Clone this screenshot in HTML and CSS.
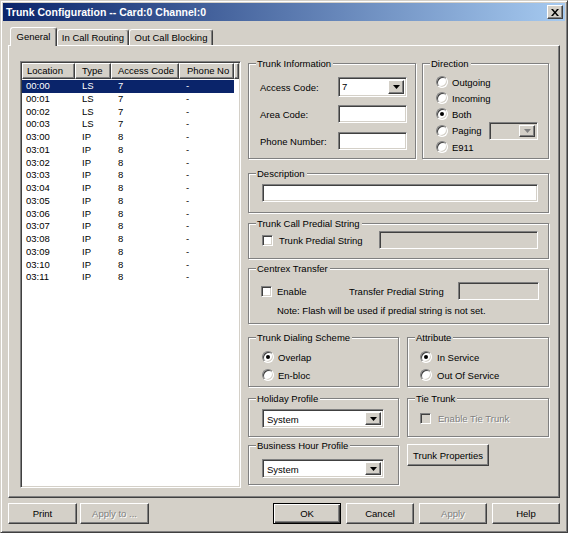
FILE: index.html
```html
<!DOCTYPE html>
<html>
<head>
<meta charset="utf-8">
<link rel="stylesheet" href="styles.css">
</head>
<body>
<div class="window">
  <div class="titlebar">
    <span class="title">Trunk Configuration -- Card:0 Channel:0</span>
    <div class="close raised"><svg width="8" height="7" viewBox="0 0 8 7"><path d="M0 0h2l2 2.4L6 0h2L5 3.5 8 7H6L4 4.6 2 7H0l3-3.5z"/></svg></div>
  </div>
  <div class="tabs">
    <div class="tab sel">General</div>
    <div class="tab t2">In Call Routing</div>
    <div class="tab t3">Out Call Blocking</div>
  </div>
  <div class="panel">
    <div class="listview sunk">
      <div class="lv-head">
        <div class="hc c1">Location</div>
        <div class="hc c2">Type</div>
        <div class="hc c3">Access Code</div>
        <div class="hc c4">Phone No</div>
        <div class="hc fill"></div>
      </div>
      <div class="lv-body">
        <div class="lv-row selrow"><span class="d1">00:00</span><span class="d2">LS</span><span class="d3">7</span><span class="d4">-</span></div>
        <div class="lv-row"><span class="d1">00:01</span><span class="d2">LS</span><span class="d3">7</span><span class="d4">-</span></div>
        <div class="lv-row"><span class="d1">00:02</span><span class="d2">LS</span><span class="d3">7</span><span class="d4">-</span></div>
        <div class="lv-row"><span class="d1">00:03</span><span class="d2">LS</span><span class="d3">7</span><span class="d4">-</span></div>
        <div class="lv-row"><span class="d1">03:00</span><span class="d2">IP</span><span class="d3">8</span><span class="d4">-</span></div>
        <div class="lv-row"><span class="d1">03:01</span><span class="d2">IP</span><span class="d3">8</span><span class="d4">-</span></div>
        <div class="lv-row"><span class="d1">03:02</span><span class="d2">IP</span><span class="d3">8</span><span class="d4">-</span></div>
        <div class="lv-row"><span class="d1">03:03</span><span class="d2">IP</span><span class="d3">8</span><span class="d4">-</span></div>
        <div class="lv-row"><span class="d1">03:04</span><span class="d2">IP</span><span class="d3">8</span><span class="d4">-</span></div>
        <div class="lv-row"><span class="d1">03:05</span><span class="d2">IP</span><span class="d3">8</span><span class="d4">-</span></div>
        <div class="lv-row"><span class="d1">03:06</span><span class="d2">IP</span><span class="d3">8</span><span class="d4">-</span></div>
        <div class="lv-row"><span class="d1">03:07</span><span class="d2">IP</span><span class="d3">8</span><span class="d4">-</span></div>
        <div class="lv-row"><span class="d1">03:08</span><span class="d2">IP</span><span class="d3">8</span><span class="d4">-</span></div>
        <div class="lv-row"><span class="d1">03:09</span><span class="d2">IP</span><span class="d3">8</span><span class="d4">-</span></div>
        <div class="lv-row"><span class="d1">03:10</span><span class="d2">IP</span><span class="d3">8</span><span class="d4">-</span></div>
        <div class="lv-row"><span class="d1">03:11</span><span class="d2">IP</span><span class="d3">8</span><span class="d4">-</span></div>
      </div>
    </div>

    <div class="right">
      <div class="row r1">
        <div class="group g-trunk">
          <div class="legend">Trunk Information</div>
          <div class="frow f1"><span class="flabel">Access Code:</span><div class="combo sunk w69 h20"><span class="ctext">7</span><div class="drop raised"><svg width="7" height="4" viewBox="0 0 7 4"><path d="M0 0h7L3.5 4z"/></svg></div></div></div>
          <div class="frow f2"><span class="flabel">Area Code:</span><div class="input sunk w69 h18"></div></div>
          <div class="frow f3"><span class="flabel">Phone Number:</span><div class="input sunk w69 h18"></div></div>
        </div>
        <div class="group g-dir">
          <div class="legend">Direction</div>
          <div class="opt o1"><span class="radio"></span><span>Outgoing</span></div>
          <div class="opt"><span class="radio"></span><span>Incoming</span></div>
          <div class="opt"><span class="radio on"></span><span>Both</span></div>
          <div class="opt opag"><span class="radio"></span><span>Paging</span><div class="combo sunk dis pcombo"><span class="ctext"></span><div class="drop raised"><svg width="7" height="4" viewBox="0 0 7 4"><path d="M0 0h7L3.5 4z" fill="#808080"/></svg></div></div></div>
          <div class="opt"><span class="radio"></span><span>E911</span></div>
        </div>
      </div>

      <div class="group g-desc">
        <div class="legend">Description</div>
        <div class="input sunk desc-in"></div>
      </div>

      <div class="group g-pred">
        <div class="legend">Trunk Call Predial String</div>
        <div class="crow pred-row"><span class="chk"></span><span class="clabel">Trunk Predial String</span><div class="input sunk dis pred-in"></div></div>
      </div>

      <div class="group g-centrex">
        <div class="legend">Centrex Transfer</div>
        <div class="crow cx-row"><span class="chk"></span><span class="clabel cx-enable">Enable</span><span>Transfer Predial String</span><div class="input sunk dis cx-in"></div></div>
        <div class="note">Note: Flash will be used if predial string is not set.</div>
      </div>

      <div class="row r5">
        <div class="group g-dial">
          <div class="legend">Trunk Dialing Scheme</div>
          <div class="opt2 first"><span class="radio on"></span><span>Overlap</span></div>
          <div class="opt2"><span class="radio"></span><span>En-bloc</span></div>
        </div>
        <div class="group g-attr">
          <div class="legend">Attribute</div>
          <div class="opt2 first"><span class="radio on"></span><span>In Service</span></div>
          <div class="opt2"><span class="radio"></span><span>Out Of Service</span></div>
        </div>
      </div>

      <div class="row r6">
        <div class="col">
          <div class="group g-hol">
            <div class="legend">Holiday Profile</div>
            <div class="combo sunk pcombo2"><span class="ctext">System</span><div class="drop raised"><svg width="7" height="4" viewBox="0 0 7 4"><path d="M0 0h7L3.5 4z"/></svg></div></div>
          </div>
          <div class="group g-bus">
            <div class="legend">Business Hour Profile</div>
            <div class="combo sunk pcombo2"><span class="ctext">System</span><div class="drop raised"><svg width="7" height="4" viewBox="0 0 7 4"><path d="M0 0h7L3.5 4z"/></svg></div></div>
          </div>
        </div>
        <div class="col">
          <div class="group g-tie">
            <div class="legend">Tie Trunk</div>
            <div class="crow tie-row"><span class="chk dis"></span><span class="clabel distext">Enable Tie Trunk</span></div>
          </div>
          <div class="btn raised tp">Trunk Properties</div>
        </div>
      </div>
    </div>
  </div>

  <div class="buttons">
    <div class="btn raised bb">Print</div>
    <div class="btn raised bb distext">Apply to ...</div>
    <div class="rgroup">
      <div class="btn def bb2">OK</div>
      <div class="btn raised bb2">Cancel</div>
      <div class="btn raised bb2 distext">Apply</div>
      <div class="btn raised bb2">Help</div>
    </div>
  </div>
</div>
</body>
</html>
```

FILE: styles.css
```css
* { box-sizing: border-box; }
body {
  margin: 0;
  background: #d4d0c8;
  font-family: "Liberation Sans", Arial, sans-serif;
  font-size: 9.5px;
  color: #000;
}
.window {
  width: 568px;
  height: 533px;
  border: 1px solid;
  border-color: #d4d0c8 #404040 #404040 #d4d0c8;
  box-shadow: inset 1px 1px #fff, inset -1px -1px #808080;
  padding: 2px;
  background: #d4d0c8;
  display: flex;
  flex-direction: column;
}
.raised {
  background: #d4d0c8;
  border: 1px solid;
  border-color: #fff #404040 #404040 #fff;
  box-shadow: inset -1px -1px #808080;
}
.sunk {
  background: #fff;
  border: 1px solid;
  border-color: #808080 #fff #fff #808080;
  box-shadow: inset 1px 1px #404040, inset -1px -1px #d4d0c8;
}
.titlebar {
  height: 18px;
  flex: none;
  background: linear-gradient(90deg, #0a246a, #a6caf0);
  display: flex;
  align-items: center;
  padding-left: 3px;
}
.title {
  color: #fff;
  font-weight: bold;
  font-size: 10.5px;
  white-space: nowrap;
}
.close {
  margin-left: auto;
  margin-right: 2px;
  width: 16px;
  height: 14px;
  display: flex;
  align-items: center;
  justify-content: center;
}
.close svg { display: block; }

.tabs {
  display: flex;
  align-items: flex-end;
  height: 18px;
  flex: none;
  margin-top: 6px;
  padding-left: 7px;
  position: relative;
  z-index: 1;
}
.tab {
  height: 16px;
  border: 1px solid;
  border-bottom: 0;
  border-color: #fff #404040 #fff #fff;
  box-shadow: inset -1px 0 #808080;
  border-radius: 3px 3px 0 0;
  display: flex;
  align-items: center;
  justify-content: center;
  background: #d4d0c8;
  white-space: nowrap;
}
.tab.sel { height: 19px; width: 47px; margin-bottom: -1px; padding-bottom: 2px; }
.tab.t2 { width: 72px; }
.tab.t3 { width: 84px; }

.panel {
  flex: none;
  margin-left: 5px;
  width: 552px;
  height: 453px;
  border: 1px solid;
  border-color: #fff #404040 #404040 #fff;
  box-shadow: inset -1px -1px #808080;
  display: flex;
  align-items: flex-start;
  padding-left: 11px;
  gap: 7px;
}

/* list view */
.listview {
  margin-top: 15px;
  width: 221px;
  height: 427px;
  padding: 1px;
  flex: none;
}
.lv-head { display: flex; height: 16px; }
.hc {
  height: 16px;
  line-height: 14px;
  background: #d4d0c8;
  border: 1px solid;
  border-color: #fff #404040 #404040 #fff;
  box-shadow: inset -1px -1px #808080;
  white-space: nowrap;
  overflow: hidden;
}
.hc.c1 { width: 53px; padding-left: 4px; }
.hc.c2 { width: 36px; padding-left: 6px; }
.hc.c3 { width: 68px; padding-left: 6px; }
.hc.c4 { width: 55px; padding-left: 7px; }
.hc.fill { flex: 1; }
.lv-body { padding-top: 1px; }
.lv-row {
  display: grid;
  grid-template-columns: 53px 36px 68px 55px;
  width: 212px;
  height: 12.75px;
  line-height: 12.75px;
  white-space: nowrap;
}
.lv-row .d1 { padding-left: 4px; }
.lv-row .d2, .lv-row .d3 { padding-left: 7px; }
.lv-row .d4 { padding-left: 7px; }
.selrow { background: #0a246a; color: #fff; }

/* right column */
.right {
  margin-top: 17px;
  width: 301px;
  flex: none;
  display: flex;
  flex-direction: column;
}
.row { display: flex; }
.group {
  --pl: 12px;
  padding-left: var(--pl);
  border: 1px solid #808080;
  box-shadow: 1px 1px 0 #fff, inset 1px 1px 0 #fff;
}
.legend {
  width: fit-content;
  margin: -6px 0 0 calc(7px - var(--pl));
  padding: 0 2px 0 1px;
  height: 11px;
  line-height: 11px;
  background: #d4d0c8;
  white-space: nowrap;
}

.r1 { gap: 6px; }
.g-trunk { width: 168px; height: 96px; --pl: 11px; }
.g-dir { width: 127px; height: 96px; --pl: 13px; padding-right: 10px; }
.frow { display: flex; align-items: center; }
.flabel { width: 78px; white-space: nowrap; }
.f1 { margin-top: 8px; }
.f2 { margin-top: 8px; }
.f3 { margin-top: 9px; }
.w69 { width: 69px; }
.h20 { height: 20px; }
.h18 { height: 18px; }

.combo {
  display: flex;
  align-items: stretch;
  padding: 2px;
}
.combo .ctext { flex: 1; padding-left: 1px; line-height: 14px; white-space: nowrap; }
.combo .drop {
  width: 16px;
  flex: none;
  display: flex;
  align-items: center;
  justify-content: center;
}
.combo .drop svg { display: block; }
.dis { background: #d4d0c8; }

.opt { display: flex; align-items: center; height: 16px; gap: 4px; white-space: nowrap; }
.opt.o1 { margin-top: 5px; }
.opt.opag { height: 17px; }
.pcombo { margin-left: auto; width: 49px; height: 18px; }

.radio {
  width: 12px;
  height: 12px;
  flex: none;
  border-radius: 50%;
  background: #fff;
  border: 1px solid;
  border-color: #808080 #fff #fff #808080;
  box-shadow: inset 1px 1px #404040, inset -1px -1px #d4d0c8;
  display: flex;
  align-items: center;
  justify-content: center;
}
.radio.on::after {
  content: "";
  width: 4px;
  height: 4px;
  border-radius: 50%;
  background: #000;
}
.chk {
  width: 11px;
  height: 11px;
  flex: none;
  background: #fff;
  border: 1px solid;
  border-color: #808080 #fff #fff #808080;
  box-shadow: inset 1px 1px #404040, inset -1px -1px #d4d0c8;
}
.chk.dis { background: #d4d0c8; }

.g-desc { margin-top: 14px; height: 40px; --pl: 13px; }
.desc-in { margin-top: 5px; width: 276px; height: 18px; }

.g-pred { margin-top: 10px; height: 36px; --pl: 13px; padding-right: 10px; }
.crow { display: flex; align-items: center; white-space: nowrap; }
.pred-row { margin-top: 2px; height: 18px; }
.clabel { margin-left: 6px; }
.pred-in { margin-left: auto; width: 159px; height: 18px; }

.g-centrex { margin-top: 9px; height: 56px; --pl: 12px; padding-right: 9px; }
.cx-row { margin-top: 8px; height: 18px; }
.cx-enable { margin-left: 5px; width: 72px; }
.cx-in { margin-left: auto; width: 81px; height: 18px; }
.note { margin-top: 5px; padding-left: 16px; height: 12px; line-height: 12px; white-space: nowrap; }

.r5 { margin-top: 13px; gap: 8px; }
.g-dial { width: 151px; height: 50px; --pl: 13px; }
.g-attr { width: 142px; height: 50px; --pl: 12px; }
.opt2 { display: flex; align-items: center; height: 18px; gap: 4px; white-space: nowrap; }
.opt2.first { margin-top: 5px; }
.g-attr .opt2 { gap: 5px; }

.r6 { margin-top: 11px; gap: 8px; }
.col { display: flex; flex-direction: column; }
.g-hol { width: 151px; height: 39px; --pl: 13px; }
.g-hol .pcombo2 { margin-top: 5px; }
.g-bus { width: 151px; height: 40px; --pl: 13px; margin-top: 8px; }
.g-bus .pcombo2 { margin-top: 8px; }
.pcombo2 { width: 122px; height: 19px; }
.pcombo2 .ctext { padding-left: 2px; line-height: 15px; }
.g-tie { width: 142px; height: 39px; --pl: 12px; }
.tie-row { margin-top: 7px; height: 14px; }
.tie-row .clabel { margin-left: 7px; }

.btn {
  display: flex;
  align-items: center;
  justify-content: center;
  white-space: nowrap;
}
.tp { margin-top: 7px; width: 82px; height: 22px; }
.distext { color: #808080; text-shadow: 1px 1px 0 #fff; }

.buttons {
  flex: none;
  display: flex;
  margin-top: 5px;
  height: 21px;
  padding-left: 5px;
  padding-right: 5px;
  gap: 3px;
}
.bb { width: 69px; height: 21px; }
.rgroup { margin-left: auto; display: flex; gap: 5px; }
.bb2 { width: 68px; height: 21px; }
.def {
  background: #d4d0c8;
  border: 1px solid #000;
  box-shadow: inset 1px 1px #fff, inset -1px -1px #404040, inset -2px -2px #808080;
}
```
